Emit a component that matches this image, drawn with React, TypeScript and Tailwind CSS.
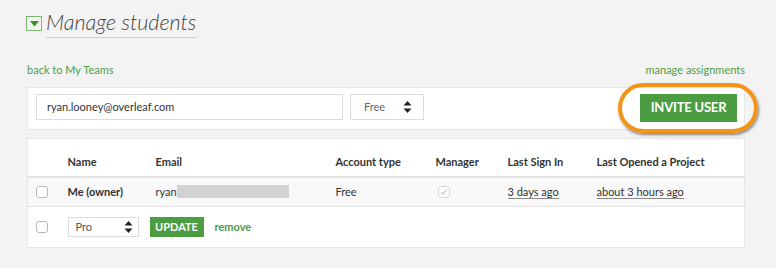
import React from "react"

const green = "text-[#4f9c45]"

function Stepper(){
    return (
        <svg width="9" height="14" viewBox="0 0 9 14" className="shrink-0">
            <path d="M4.5 1 L8.5 5.5 L0.5 5.5 Z" fill="#222" />
            <path d="M4.5 13 L8.5 8.5 L0.5 8.5 Z" fill="#222" />
        </svg>
    )
}

function Check({ checked = false, disabled = false }: { checked?: boolean, disabled?: boolean }){
    return (
        <span className={"flex size-[12px] items-center justify-center rounded-[3px] border bg-white " + (disabled ? "border-[#d6d6d6]" : "border-[#b8b8b8]")}>
            {checked && (
                <svg width="8" height="8" viewBox="0 0 8 8">
                    <path d="M1.2 4.2 L3 6.2 L6.8 1.4" fill="none" stroke="#a8a8a8" strokeWidth="0.9" />
                </svg>
            )}
        </span>
    )
}

export default function App(){
    return (
        <div className="h-[268px] w-[776px] overflow-hidden bg-[#f3f3f3] pr-[31px] pl-[27px] text-[#333]" style={{ fontFamily: "Lato, 'Open Sans', sans-serif" }}>
            {/* title */}
            <div className="flex items-end pt-[11px]">
                <span className="-ml-px mb-[7px] flex h-[15px] w-[16px] items-center justify-center border border-[#7cb874] bg-[#eef6ec]">
                    <svg width="9" height="6" viewBox="0 0 9 6"><path d="M0 0 L9 0 L4.5 5.5 Z" fill="#3f8f36" /></svg>
                </span>
                <h1 className="ml-[4px] border-b border-[#cfcfcf] pr-px pb-[3px] text-[21.5px] leading-[23px] font-light italic text-[#444]">
                    Manage students
                </h1>
            </div>

            {/* links */}
            <div className={"mt-[24px] flex justify-between text-[11px] leading-[16px] " + green}>
                <a>back to My Teams</a>
                <a>manage assignments</a>
            </div>

            {/* invite panel */}
            <div className="mt-[9px] flex h-[43px] items-start justify-between border border-[#e6e6e6] bg-white pt-[6px] pr-[7px] pl-[8px]">
                <div className="flex gap-[7px]">
                    <div className="flex h-[26px] w-[307px] items-center border border-[#dcdcdc] px-[10px] text-[11px] text-[#333]">
                        ryan.looney@overleaf.com
                    </div>
                    <div className="flex h-[26px] w-[74px] items-center justify-between border border-[#dcdcdc] pr-[11px] pl-[13px] text-[11px] text-[#666]">
                        Free
                        <Stepper />
                    </div>
                </div>
                <div className="relative">
                    <div className="flex h-[28px] w-[97px] items-center justify-center bg-[#4c9c42] text-[13px] font-bold tracking-[-0.2px] text-white">
                        INVITE USER
                    </div>
                    <div className="absolute -top-[11px] -right-[21px] -bottom-[11px] -left-[22px] rounded-full border-[4px] border-[#f39317] shadow-[1px_2px_3px_rgba(0,0,0,0.45)]"></div>
                </div>
            </div>

            {/* table */}
            <table className="mt-[8px] w-full table-fixed border border-[#e6e6e6] bg-white text-left text-[11px]">
                <colgroup>
                    <col className="w-[40px]" />
                    <col className="w-[88px]" />
                    <col className="w-[180px]" />
                    <col className="w-[100px]" />
                    <col className="w-[72px]" />
                    <col className="w-[89px]" />
                    <col />
                </colgroup>
                <thead>
                    <tr className="h-[38px] border-b-2 border-[#e2e2e2]">
                        <th></th>
                        <th className="pt-[10px] font-bold">Name</th>
                        <th className="pt-[10px] font-bold">Email</th>
                        <th className="pt-[10px] font-bold">Account type</th>
                        <th className="pt-[10px] font-bold">Manager</th>
                        <th className="pt-[10px] font-bold">Last Sign In</th>
                        <th className="pt-[10px] font-bold">Last Opened a Project</th>
                    </tr>
                </thead>
                <tbody>
                    <tr className="h-[30px] border-b border-[#e2e2e2] bg-[#f9f9f9]">
                        <td className="pl-[8px]"><Check /></td>
                        <td className="font-bold">Me (owner)</td>
                        <td>
                            <span className="flex items-center">ryan<span className="inline-block h-[13px] w-[112px] bg-[#d2d2d2]"></span></span>
                        </td>
                        <td>Free</td>
                        <td className="pl-[2px]"><Check checked disabled /></td>
                        <td><span className="border-b border-[#888]">3 days ago</span></td>
                        <td><span className="border-b border-[#888]">about 3 hours ago</span></td>
                    </tr>
                    <tr className="h-[41px]">
                        <td className="pl-[8px]"><Check /></td>
                        <td colSpan={3}>
                            <div className="flex items-center">
                                <div className="flex h-[20px] w-[71px] items-center justify-between border border-[#dcdcdc] pr-[5px] pl-[7px] text-[11px] text-[#555]">
                                    Pro
                                    <Stepper />
                                </div>
                                <div className="ml-[11px] flex h-[20px] w-[54px] items-center justify-center bg-[#4c9c42] text-[11px] font-bold text-white">
                                    UPDATE
                                </div>
                                <a className={"ml-[11px] text-[11px] font-bold " + green}>remove</a>
                            </div>
                        </td>
                        <td></td>
                        <td></td>
                        <td></td>
                    </tr>
                </tbody>
            </table>
        </div>
    )
}
